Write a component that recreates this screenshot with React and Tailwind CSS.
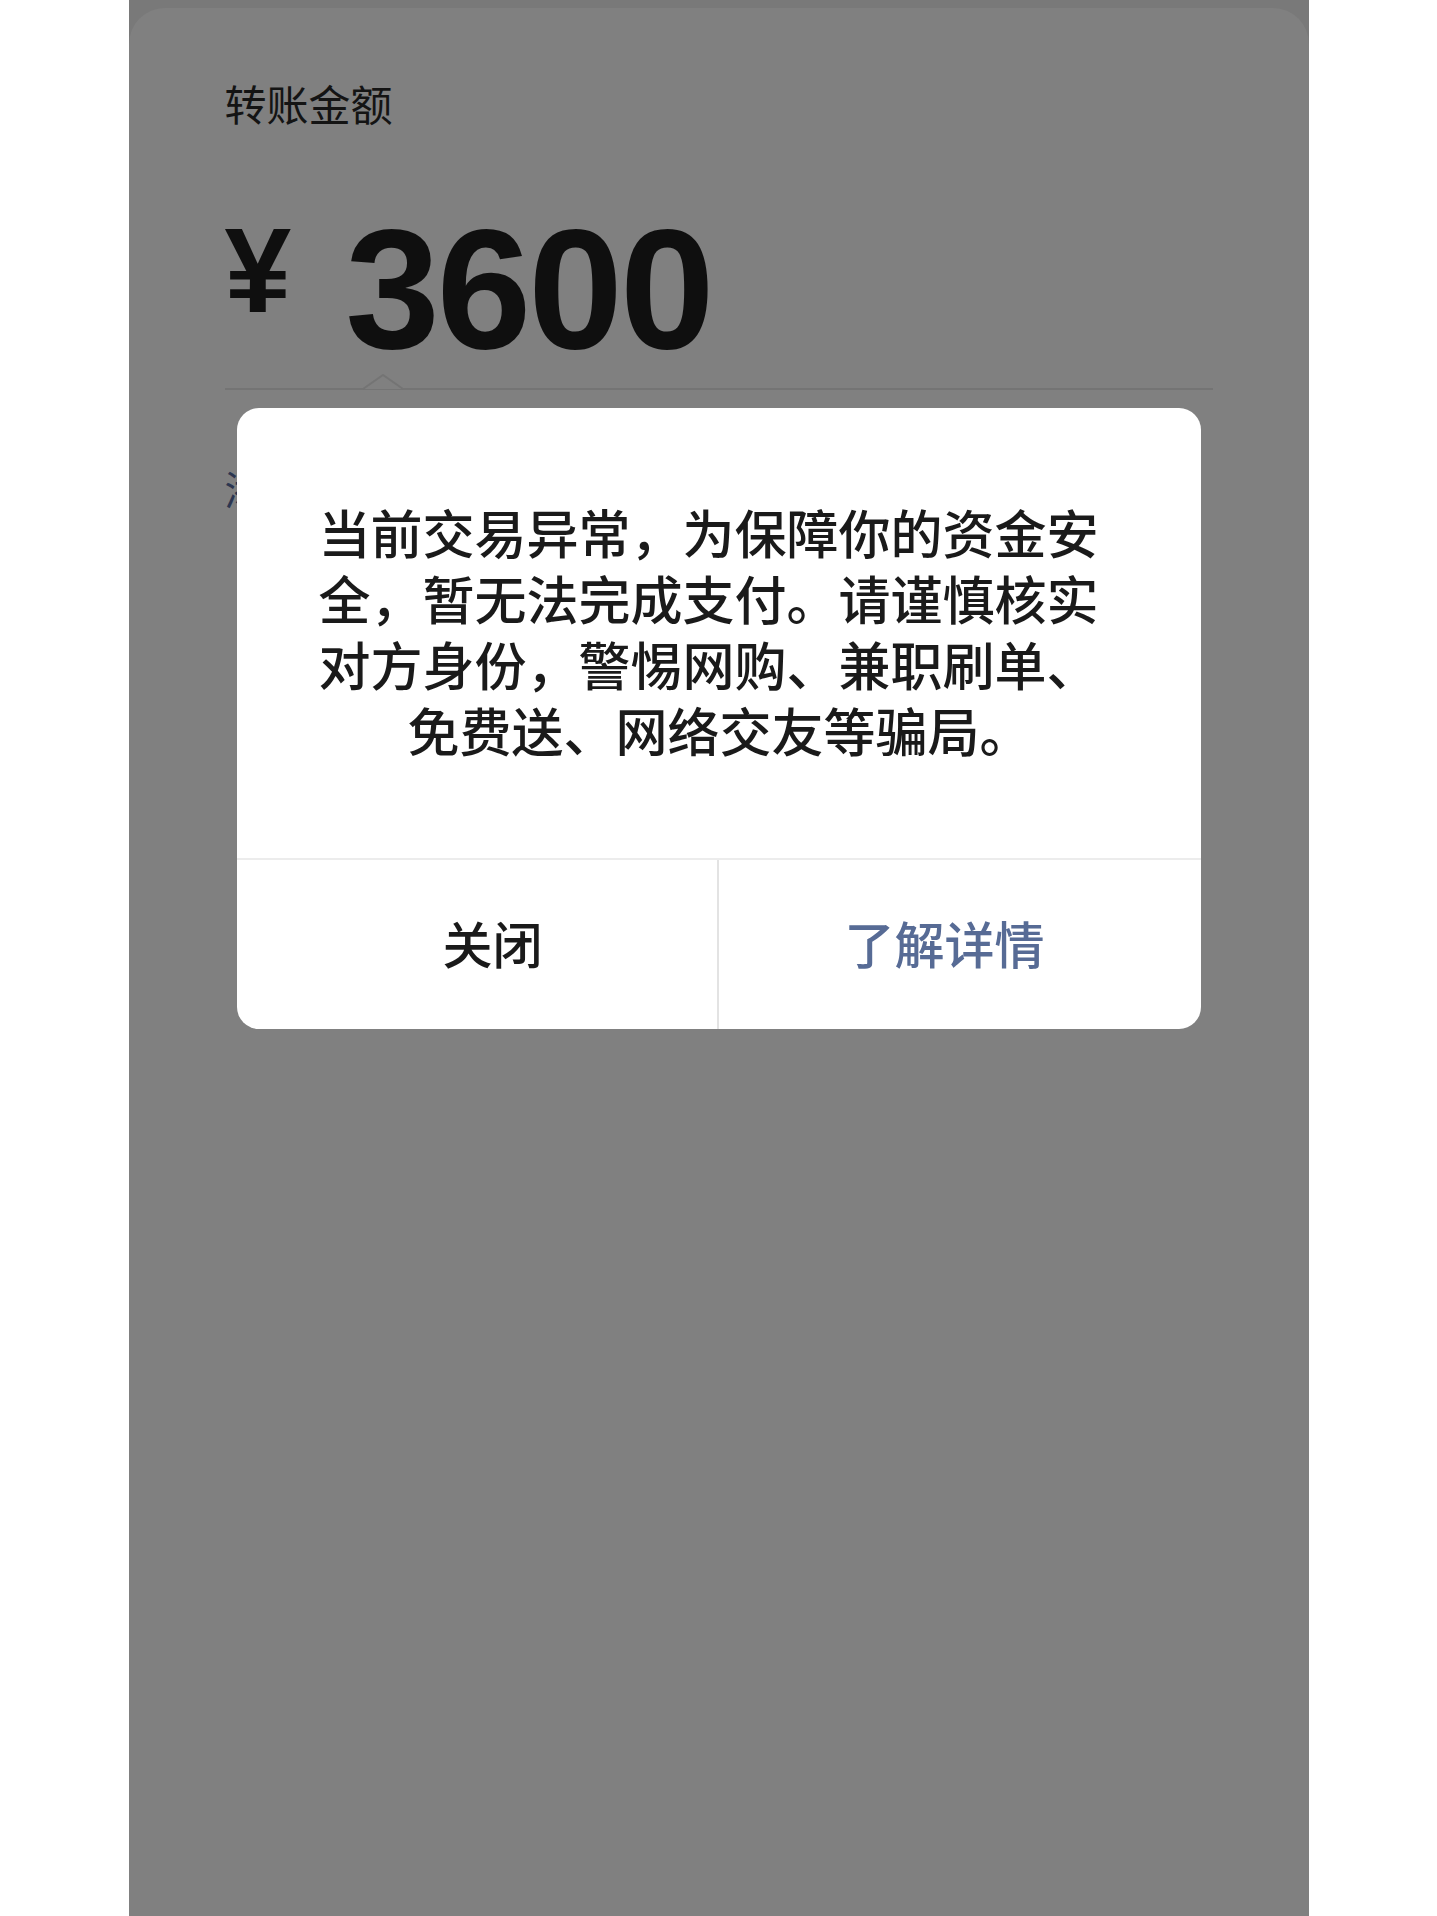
const cjk = { fontFamily: '"Noto Sans CJK SC", "Noto Sans", sans-serif' };
const num = { fontFamily: '"Liberation Sans", Arial, sans-serif' };

export default function App() {
  return (
    <div className="min-h-[1916px] w-full bg-white">
      <div className="relative mx-auto h-[1916px] w-[1180px] bg-[#797979] pt-[8px]">
        <TransferPanel />
        <AlertDialog />
      </div>
    </div>
  );
}

function TransferPanel() {
  return (
    <div className="h-full rounded-t-[36px] bg-[#808080] px-[96px] pt-[74px]" style={cjk}>
      <p className="text-[42px] leading-[42px] text-[#141414]">转账金额</p>

      <div className="mt-[80px] flex items-start" style={num}>
        <span className="mt-[6px] text-[120px] font-bold leading-none text-[#0f0f0f]">¥</span>
        <span className="ml-[54px] text-[170px] font-bold leading-none tracking-[-3px] text-[#0f0f0f]">3600</span>
      </div>

      <div className="relative mt-[14px] border-b-2 border-[#747474]">
        <svg className="absolute -top-[14px] left-[138px]" width="40" height="16" viewBox="0 0 40 16">
          <polygon points="0,15 20,1 40,15" fill="#808080" />
          <polyline points="0,15 20,1 40,15" fill="none" stroke="#747474" strokeWidth="2" />
        </svg>
      </div>

      <p className="mt-[78px] text-[40px] leading-[40px] text-[#2c3650]">添加转账说明</p>
    </div>
  );
}

function AlertDialog() {
  return (
    <div className="absolute inset-x-0 top-[408px] flex justify-center" style={cjk}>
      <div className="w-[964px] overflow-hidden rounded-[22px] bg-white">
        <div className="pl-[50px] pr-[70px] pt-[91px] pb-[95px] text-center text-[52px] font-medium leading-[66px] text-[#1a1a1a]">
          <p>当前交易异常，为保障你的资金安</p>
          <p>全，暂无法完成支付。请谨慎核实</p>
          <p>对方身份，警惕网购、兼职刷单、</p>
          <p className="pl-[22px]">免费送、网络交友等骗局。</p>
        </div>
        <div className="grid h-[171px] grid-cols-2 border-t-2 border-[#ececec]">
          <button className="border-r-2 border-[#e3e3e3] pl-[32px] pb-[4px] text-[50px] font-medium text-[#1a1a1a]">关闭</button>
          <button className="pr-[30px] pb-[4px] text-[50px] font-medium text-[#576b95]">了解详情</button>
        </div>
      </div>
    </div>
  );
}
